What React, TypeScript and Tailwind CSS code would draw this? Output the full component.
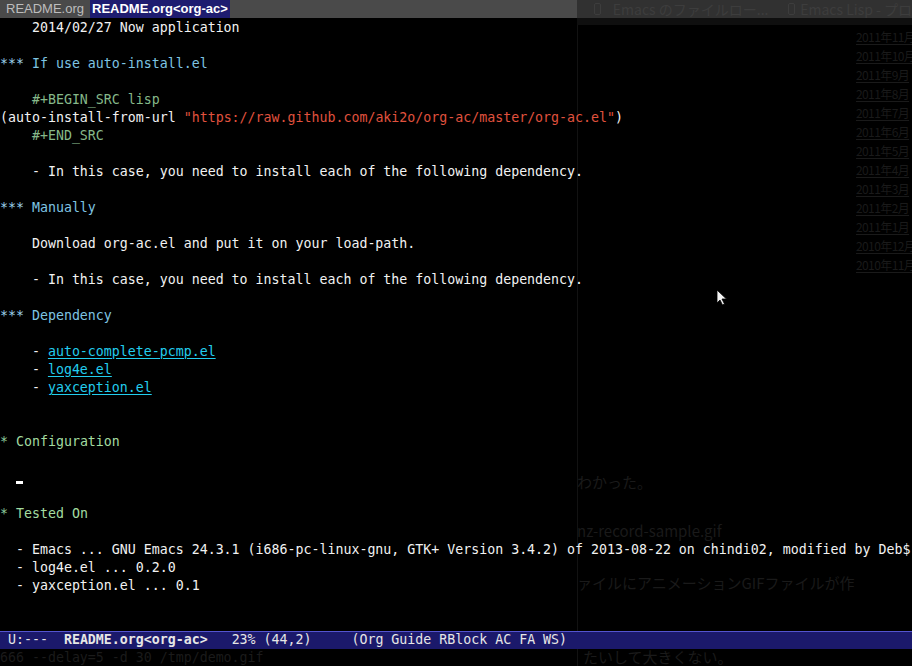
import React from "react";

type Seg = { t: string; c?: string };

const HEAD3_STAR = "text-[#9fd6ee]";
const HEAD3 = "text-[#7ec4e2]";
const HEAD1_STAR = "text-[#8fcf9f]";
const HEAD1 = "text-[#a3dca0]";
const META = "text-[#86b98a]";
const STR = "text-[#e0523e]";
const LINK = "text-[#22cdee] underline underline-offset-2";

const rows: Seg[][] = [
  [{ t: "    2014/02/27 Now application" }],
  [],
  [{ t: "***", c: HEAD3_STAR }, { t: " If use auto-install.el", c: HEAD3 }],
  [],
  [{ t: "    #+BEGIN_SRC lisp", c: META }],
  [
    { t: "(auto-install-from-url " },
    { t: '"https://raw.github.com/aki2o/org-ac/master/org-ac.el"', c: STR },
    { t: ")" },
  ],
  [{ t: "    #+END_SRC", c: META }],
  [],
  [{ t: "    - In this case, you need to install each of the following dependency." }],
  [],
  [{ t: "***", c: HEAD3_STAR }, { t: " Manually", c: HEAD3 }],
  [],
  [{ t: "    Download org-ac.el and put it on your load-path." }],
  [],
  [{ t: "    - In this case, you need to install each of the following dependency." }],
  [],
  [{ t: "***", c: HEAD3_STAR }, { t: " Dependency", c: HEAD3 }],
  [],
  [{ t: "    - " }, { t: "auto-complete-pcmp.el", c: LINK }],
  [{ t: "    - " }, { t: "log4e.el", c: LINK }],
  [{ t: "    - " }, { t: "yaxception.el", c: LINK }],
  [],
  [],
  [{ t: "*", c: HEAD1_STAR }, { t: " Configuration", c: HEAD1 }],
  [],
  [{ t: "  " }, { t: "cursor" }],
  [],
  [{ t: "*", c: HEAD1_STAR }, { t: " Tested On", c: HEAD1 }],
  [],
  [
    {
      t: "  - Emacs ... GNU Emacs 24.3.1 (i686-pc-linux-gnu, GTK+ Version 3.4.2) of 2013-08-22 on chindi02, modified by Deb$",
    },
  ],
  [{ t: "  - log4e.el ... 0.2.0" }],
  [{ t: "  - yaxception.el ... 0.1" }],
  [],
  [],
];

const dates = [
  "2011年11月",
  "2011年10月",
  "2011年9月",
  "2011年8月",
  "2011年7月",
  "2011年6月",
  "2011年5月",
  "2011年4月",
  "2011年3月",
  "2011年2月",
  "2011年1月",
  "2010年12月",
  "2010年11月",
];

function Ghost() {
  return (
    <div className="absolute inset-0 font-['Noto_Sans_CJK_JP',sans-serif] text-[#1a1a1a]">
      <div className="absolute left-[577px] top-0 bottom-0 w-px bg-[#121212]" />
      <div className="absolute left-[577px] right-0 top-[18px] h-[7px] bg-[#0f0f0f]" />
      <div className="absolute left-[856px] top-[27px] flex flex-col text-[12px] leading-[19px] tracking-[-0.6px]">
        {dates.map((d) => (
          <span key={d} className="whitespace-nowrap underline underline-offset-2">
            {d}
          </span>
        ))}
      </div>
      <div className="absolute left-[577px] top-[471px] text-[15px]">わかった。</div>
      <div className="absolute left-[577px] top-[520px] text-[15px]">nz-record-sample.gif</div>
      <div className="absolute left-[577px] top-[572px] text-[15px]">ァイルにアニメーションGIFファイルが作</div>
      <div className="absolute left-[583px] top-[646px] text-[15px]">たいして大きくない。</div>
    </div>
  );
}

function TabBar() {
  return (
    <div className="flex h-[18px] font-['Liberation_Sans',sans-serif] text-[13px] leading-[18px]">
      <div className="flex w-[577px] bg-[#4a4a4a]">
        <span className="px-[6px] text-[#bdbdbd]">README.org</span>
        <span className="bg-[#1e1c70] px-[2px] font-bold text-white">README.org&lt;org-ac&gt;</span>
      </div>
      <div className="flex flex-1 items-center overflow-hidden whitespace-nowrap bg-[#313131] font-['Noto_Sans_CJK_JP',sans-serif] text-[14px] text-[#3d3d3d]">
        <span className="ml-[17px] h-[12px] w-[12px] rounded-[2px] border border-[#3d3d3d]" />
        <span className="ml-[12px]">Emacs のファイルロー...</span>
        <span className="ml-[20px] h-[12px] w-[12px] rounded-[2px] border border-[#3d3d3d]" />
        <span className="ml-[5px]">Emacs Lisp - プロ</span>
      </div>
    </div>
  );
}

function Line({ segs }: { segs: Seg[] }) {
  return (
    <div className="h-[18px] overflow-hidden whitespace-pre pt-px leading-[18px]">
      {segs.map((s, i) =>
        s.t === "cursor" ? (
          <span key={i} className="relative inline-block h-[17px] w-[8px] align-top">
            <span className="absolute left-0 top-[12px] h-[3px] w-[7px] bg-white" />
          </span>
        ) : (
          <span key={i} className={s.c}>
            {s.t}
          </span>
        )
      )}
    </div>
  );
}

function ModeLine() {
  return (
    <div className="mt-px h-[18px] whitespace-pre border-t border-[#5454d0] bg-[#1b196b] leading-[16px] text-[#e6e6e6]">
      {" U:---  "}
      <span className="font-bold">README.org&lt;org-ac&gt;</span>
      {"   23% (44,2)     (Org Guide RBlock AC FA WS)"}
    </div>
  );
}

export default function App() {
  return (
    <div className="relative h-[666px] w-[912px] overflow-hidden bg-black">
      <Ghost />
      <div className="relative flex flex-col">
        <TabBar />
        <div className="flex flex-col font-['DejaVu_Sans_Mono',monospace] text-[13.28px] text-[#f2f2f2]">
          {rows.map((r, i) => (
            <Line key={i} segs={r} />
          ))}
          <ModeLine />
          <div className="h-[18px] whitespace-pre leading-[18px] text-[#1b1b1b]">666 --delay=5 -d 30 /tmp/demo.gif</div>
        </div>
      </div>
      <svg className="absolute left-[716px] top-[289px]" width="12" height="18" viewBox="0 0 12 18">
        <path d="M1 1 L1 14 L4 11 L6.5 16 L8.5 15 L6 10 L10.5 10 Z" fill="#f4f4f4" stroke="#000" strokeWidth="0.8" />
      </svg>
    </div>
  );
}
